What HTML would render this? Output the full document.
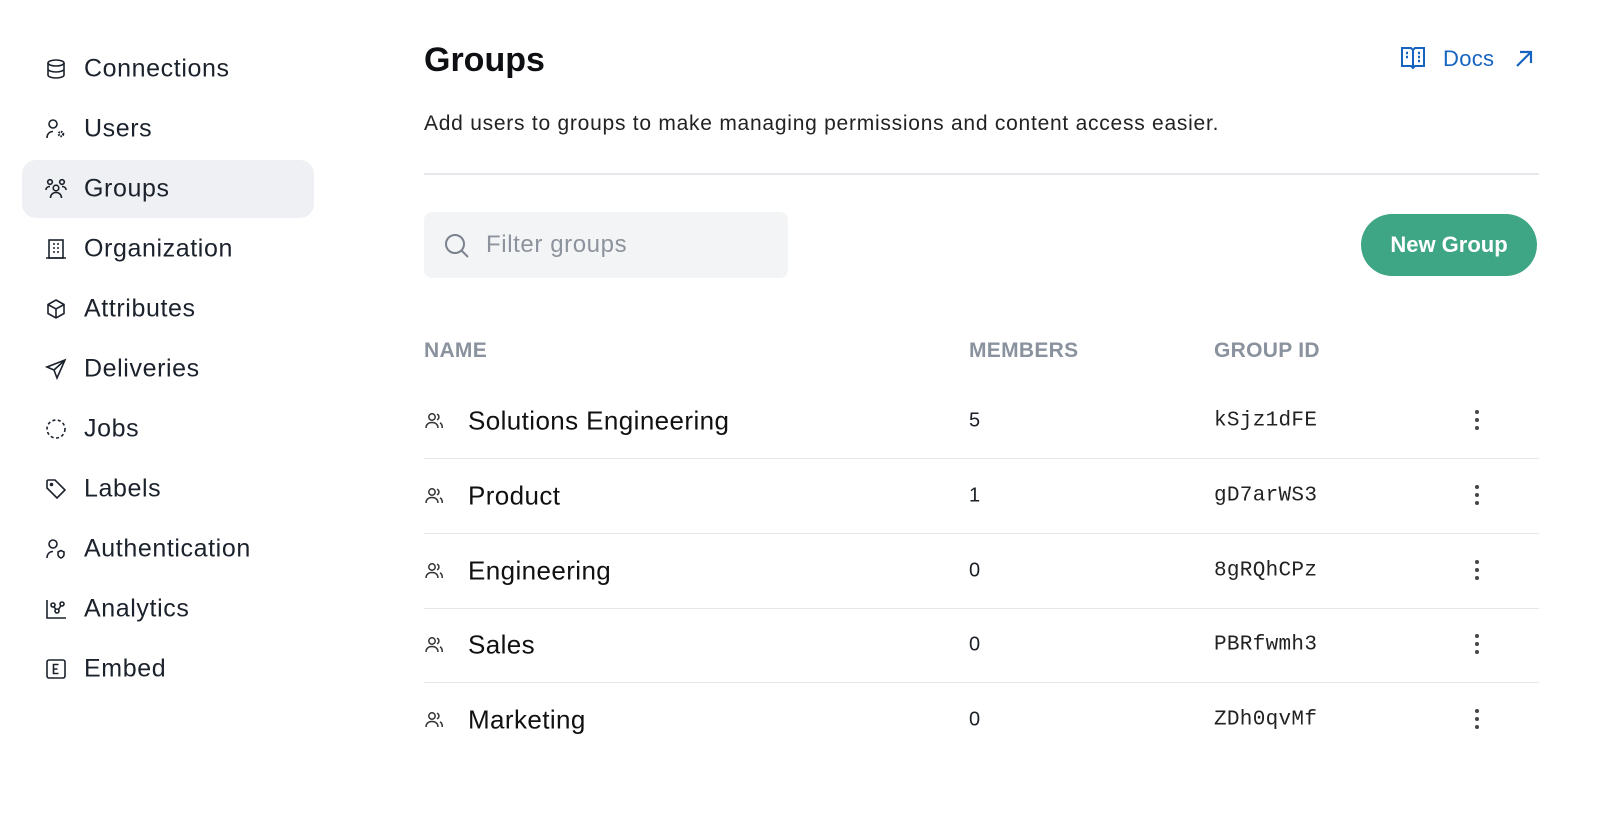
<!DOCTYPE html><html><head><style>
body{margin:0;width:1600px;height:827px;background:#fff;font-family:"Liberation Sans",sans-serif;color:#1b1f26;position:relative;overflow:hidden}
.a{position:absolute}
.nav{position:absolute;left:22px;width:292px;height:58px;border-radius:14px}
.nav span{position:absolute;left:62px;top:50%;transform:translateY(-50%);font-size:25px;letter-spacing:0.6px;color:#1b222c}
.nav svg{position:absolute;left:23px;top:18px}
.row{position:absolute;left:424px;width:1115px;height:75px;border-bottom:1px solid #e5e7eb}
.row .n{position:absolute;left:44px;top:50%;transform:translateY(-50%);font-size:26px;letter-spacing:0.4px;font-weight:500;color:#111}
.row .m{position:absolute;left:545px;top:50%;transform:translateY(-50%);font-size:20px}
.row .g{position:absolute;left:790px;top:50%;transform:translateY(-50%);font-size:21px;letter-spacing:0.3px;font-family:"Liberation Mono",monospace;color:#222}
.row svg.i{position:absolute;left:0;top:28px}
.row svg.k{position:absolute;left:1048px;top:26px}
.th{position:absolute;top:339px;font-size:21px;letter-spacing:0.3px;font-weight:bold;color:#8a929e}
</style></head><body>
<svg width="0" height="0" style="position:absolute"><defs>
<g id="grp" fill="none" stroke="#333" stroke-width="1.5"><circle cx="8" cy="6" r="3.2"/><path d="M2 17c0-3.5 2.5-5.5 6-5.5s6 2 6 5.5"/><path d="M13 3.2a3 3 0 0 1 0 5.6M16 11.8c1.5.8 2.3 2.6 2.3 5.2"/></g>
<g id="keb" fill="#444"><circle cx="5" cy="3" r="2"/><circle cx="5" cy="11" r="2"/><circle cx="5" cy="19" r="2"/></g>
</defs></svg>

<div class="nav" style="top:40px"><svg width="22" height="22" viewBox="0 0 22 22" fill="none" stroke="#1b222c" stroke-width="1.6"><ellipse cx="11" cy="5" rx="8" ry="3"/><path d="M3 5v12c0 1.7 3.6 3 8 3s8-1.3 8-3V5M3 11c0 1.7 3.6 3 8 3s8-1.3 8-3"/></svg><span>Connections</span></div>
<div class="nav" style="top:100px"><svg width="22" height="22" viewBox="0 0 22 22" fill="none" stroke="#1b222c" stroke-width="1.6"><circle cx="8" cy="6" r="4"/><path d="M2 20c0-4 2.5-6.5 6-6.5"/><circle cx="16" cy="16" r="2.2" stroke-width="2.2" stroke-dasharray="1.5 1"/></svg><span>Users</span></div>
<div class="nav" style="top:160px;background:#eef0f3"><svg width="22" height="22" viewBox="0 0 22 22" fill="none" stroke="#1b222c" stroke-width="1.6"><circle cx="5" cy="4" r="2.3"/><circle cx="17" cy="4" r="2.3"/><circle cx="11" cy="10" r="2.8"/><path d="M1 12c0-2 1.5-3.5 4-3.5M21 12c0-2-1.5-3.5-4-3.5M5.5 20c0-3.5 2.5-5.5 5.5-5.5s5.5 2 5.5 5.5"/></svg><span>Groups</span></div>
<div class="nav" style="top:220px"><svg width="22" height="22" viewBox="0 0 22 22" fill="none" stroke="#1b222c" stroke-width="1.6"><rect x="4" y="2" width="14" height="18"/><path d="M1 20h20M8 6h2M12 6h2M8 10h2M12 10h2M8 14h2M12 14h2"/></svg><span>Organization</span></div>
<div class="nav" style="top:280px"><svg width="22" height="22" viewBox="0 0 22 22" fill="none" stroke="#1b222c" stroke-width="1.6"><path d="M11 2l8 4.5v9L11 20l-8-4.5v-9zM3 6.5l8 4.5 8-4.5M11 11v9"/></svg><span>Attributes</span></div>
<div class="nav" style="top:340px"><svg width="22" height="22" viewBox="0 0 22 22" fill="none" stroke="#1b222c" stroke-width="1.6"><path d="M20 2L2 9l7 3 3 8zM9 12l11-10"/></svg><span>Deliveries</span></div>
<div class="nav" style="top:400px"><svg width="22" height="22" viewBox="0 0 22 22" fill="none" stroke="#1b222c" stroke-width="1.6"><circle cx="11" cy="11" r="9" stroke-dasharray="3 2.5"/></svg><span>Jobs</span></div>
<div class="nav" style="top:460px"><svg width="22" height="22" viewBox="0 0 22 22" fill="none" stroke="#1b222c" stroke-width="1.6"><path d="M2 3v7l10 10 8-8L10 2H3z"/><circle cx="6.5" cy="6.5" r="1" fill="#1b222c"/></svg><span>Labels</span></div>
<div class="nav" style="top:520px"><svg width="22" height="22" viewBox="0 0 22 22" fill="none" stroke="#1b222c" stroke-width="1.6"><circle cx="8" cy="6" r="4"/><path d="M2 20c0-4 2.5-6.5 6-6.5M13 14l3-1.5 3 1.5v2.5c0 1.5-1.5 3-3 3.5-1.5-.5-3-2-3-3.5z"/></svg><span>Authentication</span></div>
<div class="nav" style="top:580px"><svg width="22" height="22" viewBox="0 0 22 22" fill="none" stroke="#1b222c" stroke-width="1.6"><path d="M2 2v18h19"/><circle cx="8" cy="7" r="2"/><circle cx="17" cy="6" r="2"/><circle cx="12" cy="13" r="2"/><path d="M9 9l2 2.5M13.5 11.5l2.5-4"/></svg><span>Analytics</span></div>
<div class="nav" style="top:640px"><svg width="22" height="22" viewBox="0 0 22 22" fill="none" stroke="#1b222c" stroke-width="1.6"><rect x="2" y="2" width="18" height="18" rx="2"/><path d="M13.5 6.5h-5v9h5M8.5 11h4"/></svg><span>Embed</span></div>

<div class="a" style="left:424px;top:41px;font-size:34px;font-weight:bold;color:#0d0f12">Groups</div>
<div class="a" style="left:1400px;top:45px"><svg width="26" height="26" viewBox="0 0 26 26" fill="none" stroke="#1764c0" stroke-width="2"><path d="M2 3h9l2 2 2-2h9v18h-9l-2 2-2-2H2z M13 5v18"/><path d="M6 8h2M6 12h2M18 8h2M18 12h2M18 16h2" stroke-width="2.4"/></svg></div>
<div class="a" style="left:1443px;top:46px;font-size:22px;letter-spacing:0.3px;color:#1764c0">Docs</div>
<div class="a" style="left:1514px;top:49px"><svg width="20" height="20" viewBox="0 0 20 20" fill="none" stroke="#1764c0" stroke-width="2.2"><path d="M3 17L17 3M6 3h11v11"/></svg></div>
<div class="a" style="left:424px;top:112px;font-size:21px;letter-spacing:0.75px;color:#222;white-space:nowrap">Add users to groups to make managing permissions and content access easier.</div>
<div class="a" style="left:424px;top:173px;width:1115px;height:2px;background:#e6e8eb"></div>

<div class="a" style="left:424px;top:212px;width:364px;height:66px;border-radius:8px;background:#f3f4f6"></div>
<div class="a" style="left:444px;top:233px"><svg width="26" height="26" viewBox="0 0 26 26" fill="none" stroke="#7b828d" stroke-width="2"><circle cx="11" cy="11" r="9"/><path d="M18 18l6 6"/></svg></div>
<div class="a" style="left:486px;top:231px;font-size:24px;letter-spacing:0.6px;color:#8d939c">Filter groups</div>
<div class="a" style="left:1361px;top:214px;width:176px;height:62px;border-radius:31px;background:#3fa685;color:#fff;font-size:22px;font-weight:bold;text-align:center;line-height:62px">New Group</div>

<div class="th" style="left:424px">NAME</div>
<div class="th" style="left:969px">MEMBERS</div>
<div class="th" style="left:1214px">GROUP ID</div>

<div class="row" style="top:383px"><svg class="i" width="20" height="20" viewBox="0 0 20 20"><use href="#grp"/></svg><span class="n">Solutions Engineering</span><span class="m">5</span><span class="g">kSjz1dFE</span><svg class="k" width="10" height="24"><use href="#keb"/></svg></div>
<div class="row" style="top:458px"><svg class="i" width="20" height="20" viewBox="0 0 20 20"><use href="#grp"/></svg><span class="n">Product</span><span class="m">1</span><span class="g">gD7arWS3</span><svg class="k" width="10" height="24"><use href="#keb"/></svg></div>
<div class="row" style="top:533px"><svg class="i" width="20" height="20" viewBox="0 0 20 20"><use href="#grp"/></svg><span class="n">Engineering</span><span class="m">0</span><span class="g">8gRQhCPz</span><svg class="k" width="10" height="24"><use href="#keb"/></svg></div>
<div class="row" style="top:607px"><svg class="i" width="20" height="20" viewBox="0 0 20 20"><use href="#grp"/></svg><span class="n">Sales</span><span class="m">0</span><span class="g">PBRfwmh3</span><svg class="k" width="10" height="24"><use href="#keb"/></svg></div>
<div class="row" style="top:682px;border-bottom:none"><svg class="i" width="20" height="20" viewBox="0 0 20 20"><use href="#grp"/></svg><span class="n">Marketing</span><span class="m">0</span><span class="g">ZDh0qvMf</span><svg class="k" width="10" height="24"><use href="#keb"/></svg></div>
</body></html>
